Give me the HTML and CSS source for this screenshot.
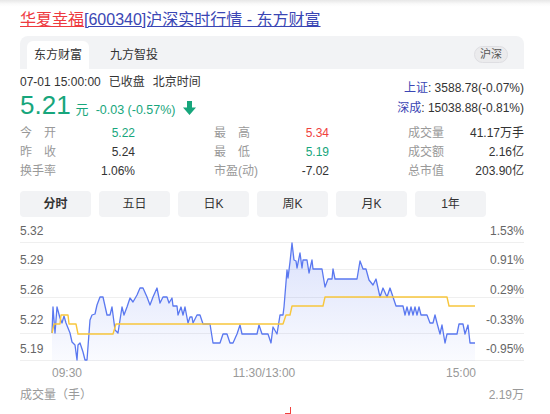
FILE: index.html
```html
<!DOCTYPE html>
<html lang="zh-CN">
<head>
<meta charset="utf-8">
<title>华夏幸福[600340]沪深实时行情 - 东方财富</title>
<link rel="stylesheet" href="styles.css">
</head>
<body>
<h1 class="title"><a class="name" href="#">华夏幸福</a><a class="rest" href="#">[600340]沪深实时行情 - 东方财富</a></h1>

<div class="tabs">
  <div class="tab active">东方财富</div>
  <div class="tab">九方智投</div>
  <span class="badge">沪深</span>
</div>

<div class="quote">
  <div class="left">
    <div class="time"><span>07-01 15:00:00</span><span>已收盘</span><span>北京时间</span></div>
    <div class="price">
      <span class="big">5.21</span><span class="unit">元</span><span class="chg">-0.03 (-0.57%)</span>
      <svg class="arrow" width="13" height="14" viewBox="0 0 13 14"><path d="M4 0h5v6.5h4L6.5 14 0 6.5h4z" fill="#17a67c"/></svg>
    </div>
  </div>
  <div class="index">
    <div><span class="iname">上证</span>: 3588.78(-0.07%)</div>
    <div><span class="iname">深成</span>: 15038.88(-0.81%)</div>
  </div>
</div>

<div class="stats">
  <div class="cell"><span class="lab">今开</span><span class="val up-g">5.22</span></div>
  <div class="cell"><span class="lab">最高</span><span class="val up-r">5.34</span></div>
  <div class="cell"><span class="lab">成交量</span><span class="val">41.17万手</span></div>
  <div class="cell"><span class="lab">昨收</span><span class="val">5.24</span></div>
  <div class="cell"><span class="lab">最低</span><span class="val up-g">5.19</span></div>
  <div class="cell"><span class="lab">成交额</span><span class="val">2.16亿</span></div>
  <div class="cell"><span class="lab">换手率</span><span class="val">1.06%</span></div>
  <div class="cell"><span class="lab wide">市盈(动)</span><span class="val">-7.02</span></div>
  <div class="cell"><span class="lab">总市值</span><span class="val">203.90亿</span></div>
</div>

<div class="periods">
  <div class="btn on">分时</div>
  <div class="btn">五日</div>
  <div class="btn">日K</div>
  <div class="btn">周K</div>
  <div class="btn">月K</div>
  <div class="btn">1年</div>
</div>

<svg class="chart" width="504" height="168" viewBox="20 217 504 168">
  <defs>
    <linearGradient id="fillg" x1="0" y1="0" x2="0" y2="1">
      <stop offset="0" stop-color="#5a78f0" stop-opacity="0.22"/>
      <stop offset="1" stop-color="#5a78f0" stop-opacity="0.03"/>
    </linearGradient>
  </defs>
  <g class="grid">
    <line x1="20" y1="242.5" x2="524" y2="242.5"/>
    <line x1="20" y1="269.5" x2="524" y2="269.5"/>
    <line x1="20" y1="297.5" x2="524" y2="297.5"/>
    <line x1="20" y1="333.5" x2="524" y2="333.5"/>
    <line x1="20" y1="360.5" x2="524" y2="360.5"/>
  </g>
  <path class="area" d="M52,333 L53,307 55,333 57,307 60,318 62,323 64,316 66,323 70,333 72,342 75,345 77,360 78,345 80,343 83,352 85,360 87,360 90,320 92,315 95,314 97,305 100,297 103,297 107,315 110,315 112,307 115,330 118,333 122,307 124,315 127,307 130,298 133,302 137,295 140,288 143,288 147,297 150,305 153,297 157,288 160,303 163,297 167,297 169,303 172,298 173,306 177,306 178,315 181,307 183,315 185,307 188,323 190,317 192,317 193,323 197,315 200,315 203,324 210,324 213,343 220,343 223,334 227,334 230,343 233,343 237,334 240,325 242,334 257,334 259,325 262,334 268,334 271,343 273,327 277,334 280,315 283,315 284,307 287,270 288,278 290,262 292,243 294,260 296,261 297,268 300,253 302,268 303,260 307,260 309,273 312,260 313,269 322,269 325,287 328,279 332,279 333,269 335,279 357,279 360,261 363,269 366,269 369,280 373,285 376,279 380,297 383,288 387,297 390,288 393,297 396,306 403,306 405,315 407,307 409,315 411,307 413,315 415,307 417,315 419,307 421,315 427,315 430,323 433,323 435,315 437,323 440,334 442,325 445,343 447,334 457,334 459,324 463,324 465,334 468,325 470,343 475,343 L475,361 L52,361 Z"/>
  <polyline class="price-line" points="52,333 53,307 55,333 57,307 60,318 62,323 64,316 66,323 70,333 72,342 75,345 77,360 78,345 80,343 83,352 85,360 87,360 90,320 92,315 95,314 97,305 100,297 103,297 107,315 110,315 112,307 115,330 118,333 122,307 124,315 127,307 130,298 133,302 137,295 140,288 143,288 147,297 150,305 153,297 157,288 160,303 163,297 167,297 169,303 172,298 173,306 177,306 178,315 181,307 183,315 185,307 188,323 190,317 192,317 193,323 197,315 200,315 203,324 210,324 213,343 220,343 223,334 227,334 230,343 233,343 237,334 240,325 242,334 257,334 259,325 262,334 268,334 271,343 273,327 277,334 280,315 283,315 284,307 287,270 288,278 290,262 292,243 294,260 296,261 297,268 300,253 302,268 303,260 307,260 309,273 312,260 313,269 322,269 325,287 328,279 332,279 333,269 335,279 357,279 360,261 363,269 366,269 369,280 373,285 376,279 380,297 383,288 387,297 390,288 393,297 396,306 403,306 405,315 407,307 409,315 411,307 413,315 415,307 417,315 419,307 421,315 427,315 430,323 433,323 435,315 437,323 440,334 442,325 445,343 447,334 457,334 459,324 463,324 465,334 468,325 470,343 475,343"/>
  <polyline class="avg-line" points="52,333 54,324 60,324 61,315 68,315 69,324 76,324 78,334 113,334 116,324 283,324 286,315 290,315 292,306 323,306 325,297 447,297 449,306 475,306"/>
  <g class="ylab">
    <text x="20" y="235">5.32</text>
    <text x="20" y="264">5.29</text>
    <text x="20" y="294">5.26</text>
    <text x="20" y="324">5.22</text>
    <text x="20" y="353">5.19</text>
  </g>
  <g class="ylab right">
    <text x="524" y="235">1.53%</text>
    <text x="524" y="264">0.91%</text>
    <text x="524" y="294">0.29%</text>
    <text x="524" y="324">-0.33%</text>
    <text x="524" y="353">-0.95%</text>
  </g>
  <g class="xlab">
    <text x="52" y="377">09:30</text>
    <text x="264" y="377" class="mid">11:30/13:00</text>
    <text x="476" y="377" class="end">15:00</text>
  </g>
</svg>

<div class="vol"><span>成交量（手）</span><span>2.19万</span></div>
<svg class="volbar" width="504" height="9" viewBox="20 405 504 9">
  <line x1="290.5" y1="407" x2="290.5" y2="414" stroke="#f0413d" stroke-width="1"/>
  <line x1="285" y1="413.5" x2="290" y2="413.5" stroke="#f0413d" stroke-width="1"/>
</svg>
</body>
</html>
```

FILE: styles.css
```css
html, body {
  margin: 0;
  padding: 0;
}
body {
  width: 504px;
  height: 414px;
  overflow: hidden;
  padding: 0 26px 0 20px;
  background: linear-gradient(#e7e7e7 0, #fafafa 4px, #ffffff 7px) no-repeat;
  font-family: "Liberation Sans", "Noto Sans CJK SC", sans-serif;
  font-size: 12px;
  color: #333;
}

.title {
  margin: 0;
  padding-top: 6px;
  height: 28px;
  line-height: 28px;
  font-size: 16px;
  font-weight: normal;
  white-space: nowrap;
}
.title a { text-decoration: underline; }
.title .name { color: #ee3a3f; }
.title .rest { color: #3a46b4; }

.tabs {
  margin-top: 2px;
  height: 33px;
  background: #f2f3f5;
  border-radius: 8px 8px 0 0;
  display: flex;
  align-items: flex-end;
  gap: 14px;
  padding: 0 16px 0 7px;
}
.tab {
  height: 28px;
  line-height: 28px;
  padding: 0 7px;
  font-size: 12px;
  color: #333;
}
.tab.active {
  background: #fff;
  border-radius: 6px 6px 0 0;
}
.badge {
  margin-left: auto;
  margin-bottom: 6px;
  height: 15px;
  line-height: 15px;
  padding: 0 5px;
  font-size: 11px;
  color: #555;
  background: #ebebed;
  border: 1px solid #dedee2;
  border-radius: 9px;
}

.quote {
  display: flex;
  justify-content: space-between;
  align-items: flex-start;
  padding-top: 5px;
}
.time {
  height: 16px;
  line-height: 16px;
  font-size: 12px;
  color: #333;
}
.time span { margin-right: 8px; }
.price {
  display: flex;
  align-items: baseline;
  height: 30px;
  color: #17a67c;
}
.price .big {
  font-size: 26px;
  line-height: 30px;
}
.price .unit {
  font-size: 13px;
  margin-left: 5px;
}
.price .chg {
  font-size: 12.5px;
  margin-left: 7px;
}
.price .arrow {
  align-self: flex-end;
  margin: 0 0 5px 7px;
}
.index {
  padding-top: 4px;
  line-height: 20px;
  text-align: right;
  font-size: 12px;
  color: #333;
}
.iname { color: #3a46b4; }

.stats {
  margin-top: 4px;
  display: grid;
  grid-template-columns: 115px 115px 116px;
  column-gap: 79px;
  line-height: 19px;
  font-size: 12px;
}
.cell {
  display: flex;
  justify-content: space-between;
  white-space: nowrap;
}
.lab {
  display: inline-block;
  width: 36px;
  color: #999;
  text-align: justify;
  text-align-last: justify;
}
.lab.wide {
  width: auto;
  text-align-last: auto;
}
.val { color: #333; }
.up-g { color: #17a67c; }
.up-r { color: #f0413d; }

.periods {
  margin-top: 10px;
  display: flex;
  gap: 8px;
}
.btn {
  width: 71px;
  height: 26px;
  line-height: 26px;
  text-align: center;
  background: #f2f3f5;
  border-radius: 4px;
  font-size: 12px;
  color: #333;
}
.btn.on { font-weight: bold; }

.chart { display: block; }
.grid line {
  stroke: #efefef;
  stroke-width: 1;
}
.area { fill: url(#fillg); }
.price-line {
  fill: none;
  stroke: #5a78f0;
  stroke-width: 1.3;
  stroke-linejoin: round;
}
.avg-line {
  fill: none;
  stroke: #f8c63c;
  stroke-width: 1.4;
  stroke-linejoin: round;
}
.ylab text {
  font-family: "Liberation Sans", sans-serif;
  font-size: 12px;
  fill: #666;
}
.ylab.right text { text-anchor: end; }
.xlab text {
  font-family: "Liberation Sans", sans-serif;
  font-size: 12px;
  fill: #999;
}
.xlab .mid { text-anchor: middle; }
.xlab .end { text-anchor: end; }

.vol {
  display: flex;
  justify-content: space-between;
  height: 20px;
  line-height: 20px;
  font-size: 12px;
  color: #999;
}
.volbar { display: block; }
```
